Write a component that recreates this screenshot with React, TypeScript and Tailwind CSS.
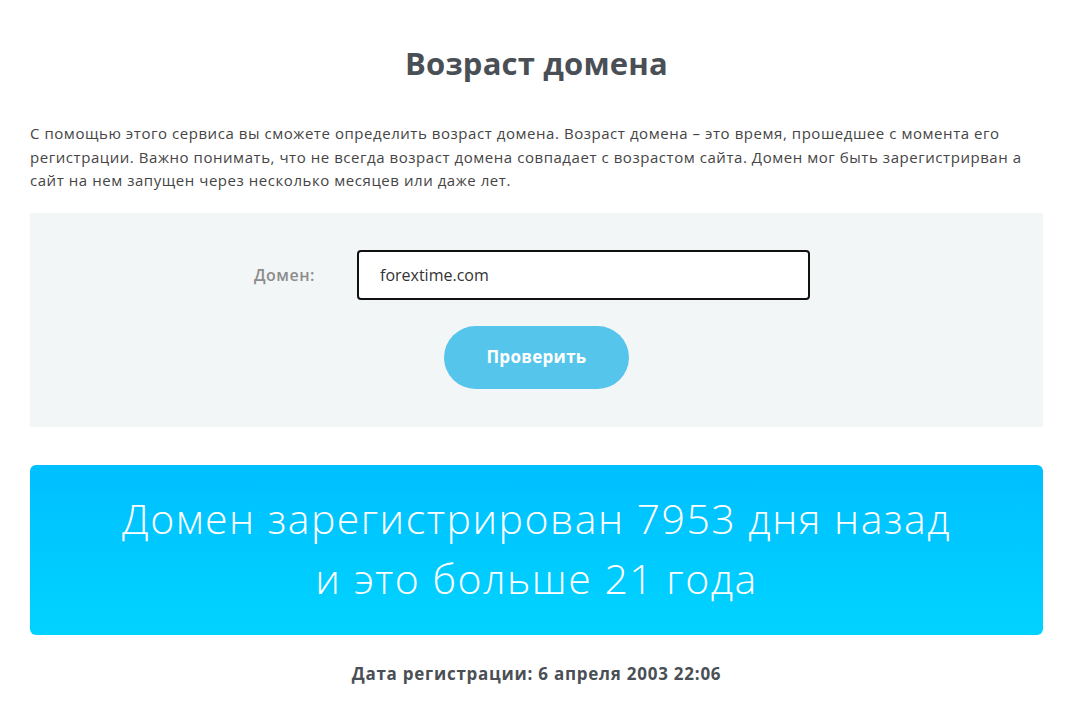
export default function App() {
  return (
    <div
      className="min-h-[718px] bg-white pl-[30px] pr-[34px] text-[#4a4f55]"
      style={{ fontFamily: '"Open Sans", "Noto Sans", sans-serif' }}
    >
      <h1 className="pt-[40px] text-center text-[31px] font-bold leading-[46px] tracking-[0.2px] text-[#4a4f55]">
        Возраст домена
      </h1>

      <p className="mt-[36px] whitespace-nowrap text-[15px] leading-[23.5px] tracking-[0.55px] text-[#454545]">
        С помощью этого сервиса вы сможете определить возраст домена. Возраст домена – это время, прошедшее с момента его
        <br />
        регистрации. Важно понимать, что не всегда возраст домена совпадает с возрастом сайта. Домен мог быть зарегистрирван а
        <br />
        сайт на нем запущен через несколько месяцев или даже лет.
      </p>

      {/* Form panel */}
      <div className="mt-[20px] flex h-[214px] flex-col items-center bg-[#f3f6f7] pt-[37px]">
        <div className="mr-[10px] flex items-center">
          <label className="w-[104px] pl-[1px] text-[16px] font-semibold tracking-[0.5px] text-[#8c8c8c]">Домен:</label>
          <input
            readOnly
            value="forextime.com"
            className="h-[50px] w-[453px] rounded-[4px] border-2 border-[#111] bg-white px-[21px] text-[16px] text-[#333] outline-none"
          />
        </div>
        <button className="mt-[26px] h-[63px] w-[185px] rounded-full bg-[#56c5ec] text-[17px] font-bold tracking-[0.3px] text-white">
          Проверить
        </button>
      </div>

      {/* Result */}
      <div className="mt-[38px] flex h-[170px] flex-col items-center justify-center rounded-[6px] bg-gradient-to-b from-[#00bfff] to-[#00d3ff] pb-[4px] text-center text-[41px] font-light leading-[60px] tracking-[1.5px] text-white">
        <div>Домен зарегистрирован 7953 дня назад</div>
        <div>и это больше 21 года</div>
      </div>

      <p className="mt-[26px] text-center text-[17px] font-bold tracking-[0.75px] text-[#4a4f55]">
        Дата регистрации: 6 апреля 2003 22:06
      </p>
    </div>
  );
}
